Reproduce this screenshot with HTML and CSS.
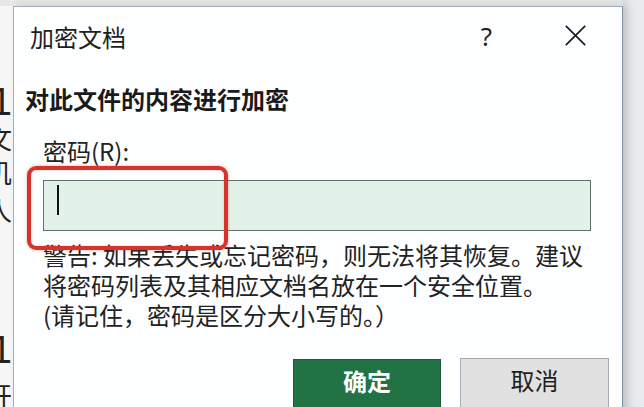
FILE: index.html
```html
<!DOCTYPE html>
<html lang="zh-CN">
<head>
<meta charset="utf-8">
<title>加密文档</title>
<link rel="stylesheet" href="styles.css">
</head>
<body>
<div class="screen">
  <div class="backdrop">
    <div class="bg-gap bg-gap-1"></div>
    <div class="bg-line bg-num"><span>21</span></div>
    <div class="bg-line bg-cjk bg-c1"><span>文</span></div>
    <div class="bg-line bg-cjk bg-c2"><span>叽</span></div>
    <div class="bg-line bg-cjk bg-c3"><span>人</span></div>
    <div class="bg-gap bg-gap-2"></div>
    <div class="bg-line bg-num"><span>21</span></div>
    <div class="bg-gap bg-gap-3"></div>
    <div class="bg-line bg-cjk bg-c4"><span>开</span></div>
  </div>

  <div class="dialog">
    <div class="titlebar">
      <span class="title">加密文档</span>
      <span class="help">?</span>
      <svg class="close" width="21" height="21" viewBox="0 0 21 21" aria-label="关闭">
        <path d="M0.8 0.8 L20.2 20.2 M20.2 0.8 L0.8 20.2" stroke="#1c1c1c" stroke-width="1.7" fill="none"/>
      </svg>
    </div>

    <div class="content">
      <div class="heading">对此文件的内容进行加密</div>
      <div class="label">密码(R):</div>
      <div class="input"><span class="caret"></span></div>
      <p class="warning">警告: 如果丢失或忘记密码，则无法将其恢复。建议<br>将密码列表及其相应文档名放在一个安全位置。<br>(请记住，密码是区分大小写的。）</p>
      <div class="buttons">
        <button class="btn btn-ok">确定</button>
        <button class="btn btn-cancel">取消</button>
      </div>
    </div>

    <div class="highlight"></div>
  </div>

  <div class="side"></div>
</div>
</body>
</html>
```

FILE: styles.css
```css
html, body {
  margin: 0;
  padding: 0;
}

body {
  width: 644px;
  height: 407px;
  overflow: hidden;
  background: #e5e7e9;
  font-family: "Noto Sans CJK SC", "Noto Sans", sans-serif;
  color: #1f1f1f;
}

.screen {
  display: flex;
  height: 407px;
  overflow: hidden;
}

/* page behind the dialog, mostly hidden */
.backdrop {
  flex: none;
  width: 13px;
  margin-top: 6px;
  background: #f6f6f6;
  overflow: hidden;
  color: #222;
}

.bg-gap-1 { height: 76px; }
.bg-gap-2 { height: 100px; }
.bg-gap-3 { height: 10px; }

.bg-line {
  display: flex;
  justify-content: flex-end;
  white-space: nowrap;
  padding-right: 1px;
}

.bg-num {
  font-family: "Liberation Sans", sans-serif;
  font-size: 38px;
  line-height: 40px;
}

.bg-cjk {
  font-size: 26px;
}

.bg-c1 { line-height: 32px; }
.bg-c2 { line-height: 36px; }
.bg-c3 { line-height: 40px; }
.bg-c4 { line-height: 30px; }

/* dialog */
.dialog {
  position: relative;
  flex: none;
  box-sizing: border-box;
  width: 610px;
  height: 430px;
  margin-top: 6px;
  background: #fdfeff;
  border: 1px solid #a3afba;
  border-right-color: #7e8f9f;
  box-shadow: 4px 0 8px rgba(60, 70, 80, 0.18);
}

.titlebar {
  display: flex;
  align-items: center;
  height: 60px;
  padding-left: 16px;
}

.title {
  font-size: 24px;
  line-height: 30px;
  font-weight: 400;
  color: #1e1e1e;
}

.help {
  margin-left: auto;
  margin-right: 73px;
  margin-top: -2px;
  font-family: "Noto Sans", sans-serif;
  font-size: 26px;
  line-height: 26px;
  color: #202020;
}

.close {
  display: block;
  margin-right: 36px;
  margin-top: -3px;
}

.content {
  padding-left: 29px;
}

.heading {
  margin-left: -18px;
  margin-top: 17px;
  font-size: 24px;
  line-height: 30px;
  font-weight: 700;
  color: #1a1a1a;
}

.label {
  margin-top: 24px;
  font-size: 24px;
  line-height: 26px;
  color: #222;
}

.input {
  box-sizing: border-box;
  width: 548px;
  height: 51px;
  margin-top: 16px;
  background: #e3f2e9;
  border: 1px solid #5f7466;
  padding: 4px 0 0 13px;
}

.caret {
  display: block;
  width: 2px;
  height: 30px;
  background: #111;
}

.warning {
  margin: 9px 0 0;
  font-size: 24px;
  line-height: 30px;
  white-space: nowrap;
  color: #222;
}

.buttons {
  display: flex;
  align-items: flex-start;
  justify-content: flex-end;
  gap: 19px;
  margin-top: 28px;
  margin-right: 13px;
}

.btn {
  box-sizing: border-box;
  padding: 8px 0 20px;
  margin: 0;
  font: inherit;
  font-size: 24px;
  line-height: 26px;
  text-align: center;
}

.btn-ok {
  width: 148px;
  margin-top: 1px;
  background: #217346;
  border: 1px solid #1b5c38;
  color: #ffffff;
  font-weight: 700;
}

.btn-cancel {
  width: 149px;
  background: #e1e1e1;
  border: 1px solid #a9a9a9;
  color: #1f1f1f;
}

/* red annotation drawn over the password box */
.highlight {
  position: absolute;
  left: 13px;
  top: 159px;
  width: 201px;
  height: 84px;
  box-sizing: border-box;
  border: 4.5px solid #d8332b;
  border-radius: 9px;
  box-shadow: 0 0 3px rgba(216, 51, 43, 0.45), inset 0 0 2px rgba(216, 51, 43, 0.35);
}

.side {
  flex: 1;
  background: linear-gradient(to right, #d9dde1, #e6e8eb 8px, #eaecee);
}
```
